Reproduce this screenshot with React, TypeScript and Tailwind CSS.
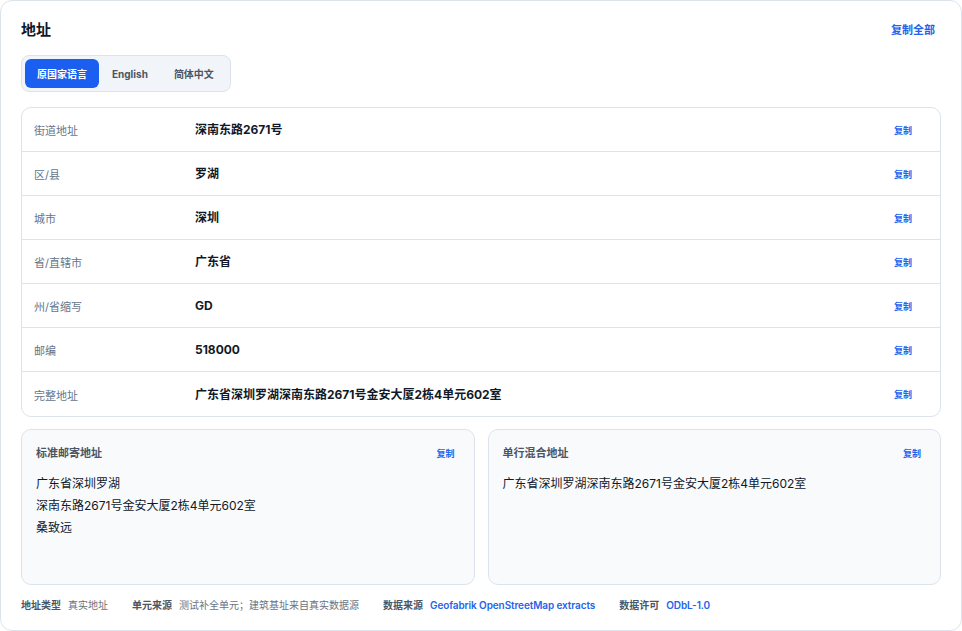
import React from 'react';

const rows = [
  { label: '街道地址', value: '深南东路2671号' },
  { label: '区/县', value: '罗湖' },
  { label: '城市', value: '深圳' },
  { label: '省/直辖市', value: '广东省' },
  { label: '州/省缩写', value: 'GD' },
  { label: '邮编', value: '518000' },
  { label: '完整地址', value: '广东省深圳罗湖深南东路2671号金安大厦2栋4单元602室' },
];

const tabs = ['原国家语言', 'English', '简体中文'];

const footer = [
  { label: '地址类型', value: '真实地址' },
  { label: '单元来源', value: '测试补全单元；建筑基址来自真实数据源' },
  { label: '数据来源', value: 'Geofabrik OpenStreetMap extracts', link: true },
  { label: '数据许可', value: 'ODbL-1.0', link: true },
];

function CopyButton({ className = '' }: { className?: string }) {
  return <button className={`text-[9px] font-bold text-[#2563eb] leading-none ${className}`}>复制</button>;
}

function AddressCard({ title, lines }: { title: string; lines: string[] }) {
  return (
    <div className="h-[156px] rounded-[10px] border border-[#dde3ec] bg-[#f8fafc] pl-[14px] pr-[19px] pt-[15px]">
      <div className="flex items-center justify-between">
        <span className="text-[11px] font-bold text-[#4b5563]">{title}</span>
        <CopyButton />
      </div>
      <div className="mt-[11px] text-[12px] leading-[22px] text-[#111827]">
        {lines.map((l, i) => (
          <div key={i}>{l}</div>
        ))}
      </div>
    </div>
  );
}

export default function App() {
  return (
    <div
      className="h-[631px] w-full rounded-xl border border-[#dde3ec] bg-white px-5 pt-5"
      style={{ fontFamily: 'Inter, "Noto Sans CJK SC", sans-serif' }}
    >
      <div className="flex items-center justify-between pr-[6px]">
        <h1 className="text-[15px] font-bold leading-[18px] text-[#0f172a]">地址</h1>
        <button className="text-[11px] font-bold text-[#2563eb]">复制全部</button>
      </div>

      <div className="mt-[16px] inline-flex items-center rounded-lg border border-[#dde3ec] bg-[#f1f4f8] p-[3px]">
        {tabs.map((t, i) => (
          <button
            key={t}
            className={
              i === 0
                ? 'h-[29px] rounded-md bg-[#1a5ff0] px-[12px] pt-[2px] text-[10px] font-bold text-white'
                : 'h-[29px] px-[13px] pt-[2px] text-[10px] font-bold text-[#4b5563]'
            }
          >
            {t}
          </button>
        ))}
      </div>

      <div className="mt-[15px] divide-y divide-[#dde3ec] rounded-[10px] border border-[#dde3ec]">
        {rows.map((r) => (
          <div key={r.label} className="flex h-11 items-center pl-3 pr-[28px] pt-[1px]">
            <span className="w-[161px] shrink-0 pt-[3px] text-[11px] text-[#64748b]">{r.label}</span>
            <span className="flex-1 text-[12px] font-bold text-[#111827]">{r.value}</span>
            <CopyButton />
          </div>
        ))}
      </div>

      <div className="mt-[12px] grid grid-cols-2 gap-[13px]">
        <AddressCard title="标准邮寄地址" lines={['广东省深圳罗湖', '深南东路2671号金安大厦2栋4单元602室', '桑致远']} />
        <AddressCard title="单行混合地址" lines={['广东省深圳罗湖深南东路2671号金安大厦2栋4单元602室']} />
      </div>

      <div className="mt-[13px] flex items-center gap-6 text-[10px]">
        {footer.map((f) => (
          <div key={f.label} className="flex items-center gap-[7px]">
            <span className="font-bold text-[#4b5563]">{f.label}</span>
            <span className={f.link ? 'font-semibold tracking-[-0.1px] text-[#2563eb]' : 'text-[#6b7280]'}>{f.value}</span>
          </div>
        ))}
      </div>
    </div>
  );
}
